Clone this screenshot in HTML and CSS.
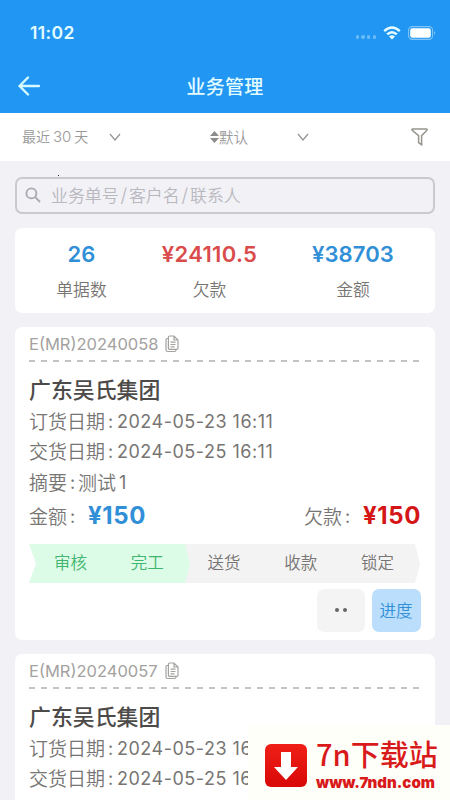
FILE: index.html
```html
<!DOCTYPE html>
<html lang="zh-CN">
<head>
<meta charset="utf-8">
<title>业务管理</title>
<link rel="stylesheet" href="styles.css">
</head>
<body>
<svg class="defs" aria-hidden="true">
  <symbol id="copy" viewBox="0 0 14 18">
    <path d="M3 3.5H2.2Q1 3.5 1 4.7V15Q1 16.5 2.5 16.5H9.5Q11 16.5 11 15M4.5 1H9L13 5V13Q13 14.3 11.7 14.3H4.7Q3.4 14.3 3.4 13V2.2Q3.4 1 4.5 1ZM9 1V5H13M5.5 7.2H10.5M5.5 9.5H10.5M5.5 11.8H9.5"/>
  </symbol>
</svg>
<div class="screen">
  <header class="header">
    <div class="status">
      <span class="clock">11:02</span>
      <span class="signal"><i></i><i></i><i></i><i></i></span>
      <svg class="wifi" viewBox="0 0 18 14"><path class="arc" d="M1.2 5.1Q9 -2 16.8 5.1M4.2 8.4Q9 4 13.8 8.4"/><path class="dot" d="M9 13.4L6 10.4Q9 8.2 12 10.4Z"/></svg>
      <svg class="battery" viewBox="0 0 28 14"><rect class="shell" x=".6" y=".6" width="24" height="12.8" rx="3.6"/><rect class="level" x="2.2" y="2.2" width="20.6" height="9.6" rx="2.2"/><path class="tip" d="M26 5Q28.4 7 26 9Z"/></svg>
    </div>
    <div class="titlebar">
      <svg class="back" viewBox="0 0 22 20"><path d="M21 10H1.5M10 1.5L1.5 10L10 18.5"/></svg>
      <h1>业务管理</h1>
    </div>
  </header>
  <nav class="filters">
    <span class="range">最近<b>30</b>天</span>
    <svg class="chev" viewBox="0 0 12 8"><path d="M1 1L6 7L11 1"/></svg>
    <svg class="sort" viewBox="0 0 9 12"><path d="M4.5 0L9 5H0ZM0 7H9L4.5 12Z"/></svg>
    <span class="order">默认</span>
    <svg class="chev second" viewBox="0 0 12 8"><path d="M1 1L6 7L11 1"/></svg>
    <svg class="funnel" viewBox="0 0 17 18"><path d="M1.6 1H15.4Q16.4 1 16 2.2L10.6 7.6V16.8L7.6 14.6V7.6L1 2.2Q.7 1 1.6 1Z"/></svg>
  </nav>
  <main class="content">
    <div class="search">
      <i class="speck"></i>
      <svg class="lens" viewBox="0 0 16 16"><circle cx="6.4" cy="6.4" r="5"/><path d="M10.2 10.2L15 15"/></svg>
      <span>业务单号<em>/</em>客户名<em>/</em>联系人</span>
    </div>
    <section class="stats">
      <div class="stat blue"><strong>26</strong><span>单据数</span></div>
      <div class="stat red"><strong>¥24110.5</strong><span>欠款</span></div>
      <div class="stat blue last"><strong>¥38703</strong><span>金额</span></div>
    </section>
    <article class="order-card">
      <div class="number"><span>E(MR)20240058</span><svg class="copy"><use href="#copy"/></svg></div>
      <svg class="dash" viewBox="0 0 392 2"><path d="M0 1H392"/></svg>
      <h2>广东吴氏集团</h2>
      <div class="line"><span class="label">订货日期</span><span class="colon">:</span><span class="date">2024-05-23 16:11</span></div>
      <div class="line"><span class="label">交货日期</span><span class="colon">:</span><span class="date">2024-05-25 16:11</span></div>
      <div class="line note"><span class="label">摘要</span><span class="colon">:</span><span class="label">测试</span><span class="one">1</span></div>
      <div class="money">
        <span class="label">金额</span><span class="colon">:</span><strong>¥150</strong>
        <span class="label due">欠款</span><span class="colon">:</span><strong class="owed">¥150</strong>
      </div>
      <div class="steps">
        <svg class="track" viewBox="0 0 391 39" preserveAspectRatio="none"><path class="todo" d="M154 0H386L391 19.5L386 39H154Z"/><path class="done" d="M0 0H156L161 19.5L156 39H0L7 19.5Z"/></svg>
        <span class="ok">审核</span><span class="ok">完工</span><span>送货</span><span>收款</span><span>锁定</span>
      </div>
      <div class="actions">
        <button class="more" aria-label="更多"><i></i><i></i></button>
        <button class="progress">进度</button>
      </div>
    </article>
    <article class="order-card">
      <div class="number"><span>E(MR)20240057</span><svg class="copy"><use href="#copy"/></svg></div>
      <svg class="dash" viewBox="0 0 392 2"><path d="M0 1H392"/></svg>
      <h2>广东吴氏集团</h2>
      <div class="line"><span class="label">订货日期</span><span class="colon">:</span><span class="date">2024-05-23 16:11</span></div>
      <div class="line"><span class="label">交货日期</span><span class="colon">:</span><span class="date">2024-05-25 16:11</span></div>
    </article>
  </main>
  <aside class="stamp">
    <svg class="download" viewBox="0 0 42 43"><defs><linearGradient id="g" x2="0" y2="1"><stop stop-color="#f02018"/><stop offset="1" stop-color="#d80808"/></linearGradient></defs><rect width="42" height="43" rx="6" fill="url(#g)"/><path d="M16 8H26V23H33L21 36L9 23H16Z" fill="#fff"/></svg>
    <div class="site"><span class="name">7n下载站</span><span class="url">www.7ndn.com</span></div>
  </aside>
</div>
</body>
</html>
```
FILE: styles.css
```css
* { box-sizing: border-box; }
body { margin: 0; font-family: Inter, "Noto Sans CJK SC", sans-serif; color: #777573; }
svg { display: block; flex: none; fill: none; }
i, em, b { font-style: normal; font-weight: inherit; }
.defs { position: absolute; width: 0; height: 0; }
.screen { position: relative; width: 450px; height: 800px; overflow: hidden; background: #f1f1f6; }

.header { height: 113px; background: #2196f3; color: #e3fcff; }
.status { display: flex; align-items: center; height: 66px; padding: 0 14px 0 30px; }
.clock { margin-top: -1px; font-size: 17.5px; font-weight: 600; letter-spacing: 0.4px; }
.signal { display: flex; gap: 2.1px; margin: 8px 7px 0 auto; }
.signal i { width: 3.5px; height: 3.5px; border-radius: 2px; background: #6bbcf8; }
.wifi { width: 18px; height: 14px; margin-right: 7px; }
.wifi .arc { stroke: #e8fdff; stroke-width: 2.5; }
.wifi .dot { fill: #e8fdff; }
.battery { width: 28px; height: 14px; }
.battery .shell { stroke: #80c4f8; stroke-width: 1.1; }
.battery .level { fill: #fff; }
.battery .tip { fill: #80c4f8; }
.titlebar { display: flex; align-items: center; height: 42px; padding: 0 18px; }
.back { width: 22px; height: 20px; margin-top: -2px; stroke: #d4faff; stroke-width: 2.4; stroke-linecap: round; stroke-linejoin: round; }
h1 { flex: 1; margin: 1px 24px 0 0; padding-left: 2px; font-size: 19px; font-weight: 500; line-height: 42px; letter-spacing: 0.3px; text-align: center; }

.filters { display: flex; align-items: center; height: 48px; padding: 0 22px; background: #fff; color: #999; font-size: 14px; font-weight: 350; }
.range, .order { margin-top: -2px; white-space: nowrap; }
.range { width: 87px; }
.range b { margin: 0 3px; font-size: 15px; }
.chev { width: 12px; height: 8px; stroke: #969696; stroke-width: 1.3; }
.sort { width: 9px; height: 12px; margin-left: 89px; fill: #8c8c8c; }
.order { width: 29px; font-size: 14.5px; }
.second { margin-left: 49px; }
.funnel { width: 17px; height: 18px; margin-left: auto; stroke: #96948c; stroke-width: 1.5; }

.content { padding: 16px 15px 0; }
.search { position: relative; display: flex; align-items: center; height: 37px; margin-bottom: 14px; padding-left: 8px; border: 2px solid #c9c9ce; border-radius: 7px; color: #b9b8be; font-size: 16.9px; font-weight: 350; }
.search > span { margin: -2px 0 0 -1px; }
.speck { position: absolute; left: 41px; top: -4px; width: 1px; height: 1px; background: #222; }
.lens { width: 16px; height: 16px; margin: -1px 11px 0 0; stroke: #aaa9af; stroke-width: 1.9; }
.search em { margin: 0 1.9px; font-size: 19px; }

.stats { display: flex; height: 85px; margin-bottom: 14px; padding: 11px 0 0; border-radius: 7px; background: #fff; }
.stat { display: flex; flex-direction: column; align-items: center; width: 133px; }
.stat:nth-child(2) { width: 123px; }
.last { width: 164px; }
.stat strong { font-size: 22px; font-weight: 600; line-height: 30px; letter-spacing: 0.1px; }
.red strong { letter-spacing: 0.3px; }
.stat span { margin-top: 5px; font-size: 16.8px; font-weight: 350; line-height: 32px; }
.blue strong { color: #318fd8; }
.red strong { color: #d94c4b; }

.order-card { height: 313px; margin-bottom: 14px; padding: 0 14px; border-radius: 7px; background: #fff; }
.number { display: flex; align-items: center; height: 33px; color: #a3a2a0; font-size: 16.5px; }
.number span { width: 130px; }
.copy { width: 14px; height: 18px; margin-left: 6px; stroke: #a3a2a0; stroke-width: 1.2; }
.dash { width: 392px; height: 2px; stroke: #b0b0b0; stroke-width: 1.3; stroke-dasharray: 6 6; }
h2 { margin: 12px 0 0; color: #4d4b49; font-size: 21.9px; font-weight: 500; line-height: 32px; }
.line, .money { display: flex; align-items: center; height: 30.5px; white-space: nowrap; font-size: 18px; }
.label { margin-top: -2px; font-size: 19px; font-weight: 350; }
.colon { width: 12px; padding-left: 3px; }
.date { letter-spacing: 0.5px; }
.one { margin-left: 3px; }
.note .colon { width: 11px; }
.money { height: 37px; }
.money .colon { width: 21px; padding-left: 3px; }
.money strong { margin-top: -1px; color: #318fd8; font-size: 24px; font-weight: 650; letter-spacing: 0.6px; }
.due { margin-left: auto; }
.money .owed { color: #d51617; }
.steps { position: relative; display: flex; height: 39px; margin-top: 9px; padding: 0 3px; }
.track { position: absolute; inset: 0; width: 391px; height: 39px; }
.todo { fill: #f3f3f3; }
.done { fill: #dcfce7; }
.steps span { position: relative; width: 76.8px; flex: none; font-size: 16.5px; font-weight: 350; line-height: 38px; text-align: center; }
.steps .ok { color: #3fb56f; }
.actions { display: flex; justify-content: flex-end; gap: 7px; margin: 6px 0 0; }
.actions button { display: flex; align-items: center; justify-content: center; width: 49px; height: 43px; padding: 0 1px 1px 0; border: 0; border-radius: 7px; font: 350 16.5px Inter, "Noto Sans CJK SC", sans-serif; }
.actions .more { width: 48px; gap: 4px; padding: 0; background: #f4f4f4; }
.more i { width: 4px; height: 4px; border-radius: 50%; background: #666; }
.actions .progress { background: #badefb; color: #318fd8; }

.stamp { position: absolute; right: 0; bottom: 0; display: flex; width: 202px; height: 75px; padding: 14px 0 0 17px; background: #fffffa; color: #d91a1a; }
.download { width: 42px; height: 43px; margin-top: 5px; }
.site { display: flex; flex-direction: column; margin-left: 9px; white-space: nowrap; }
.name { height: 34px; font: 500 29px/29px "Noto Sans CJK SC", sans-serif; }
.url { font: 900 15px/20px Inter, sans-serif; }
```
